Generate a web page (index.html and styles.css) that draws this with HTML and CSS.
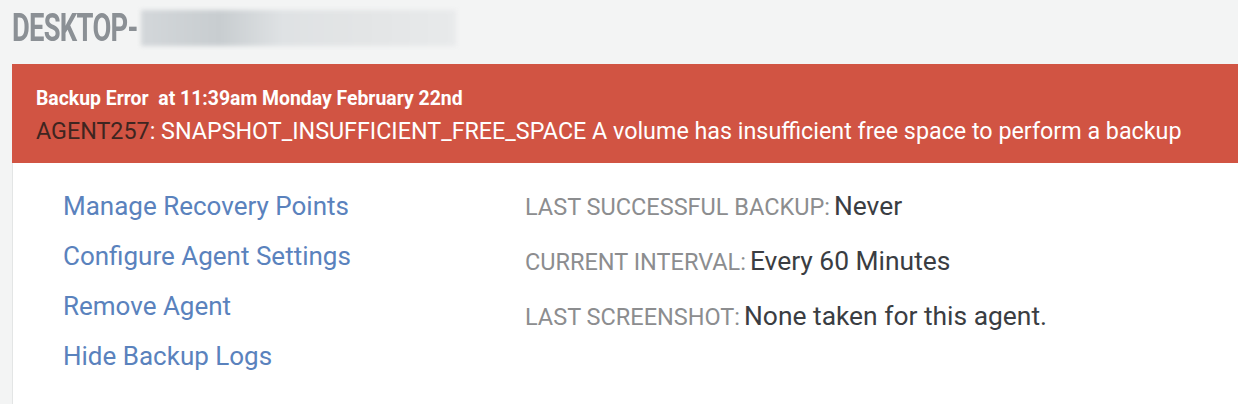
FILE: index.html
```html
<!DOCTYPE html>
<html lang="en">
<head>
    <meta charset="UTF-8">
    <meta name="viewport" content="width=device-width, initial-scale=1.0">
    <title>Agent Details</title>
    <link rel="stylesheet" href="styles.css">
</head>
<body>
    <!-- Agent name (hostname is blurred) -->
    <div class="agent-header">
        <h1 class="agent-name">DESKTOP-</h1>
        <span class="hostname-blur"></span>
    </div>

    <!-- Error banner -->
    <div class="error-banner">
        <p class="error-title">Backup Error &nbsp;at 11:39am Monday February 22nd</p>
        <p class="error-message"><span class="agent-id">AGENT257</span>: SNAPSHOT_INSUFFICIENT_FREE_SPACE A volume has insufficient free space to perform a backup</p>
    </div>

    <div class="agent-panel">
        <ul class="agent-actions">
            <li><a href="#">Manage Recovery Points</a></li>
            <li><a href="#">Configure Agent Settings</a></li>
            <li><a href="#">Remove Agent</a></li>
            <li><a href="#">Hide Backup Logs</a></li>
        </ul>

        <ul class="agent-stats">
            <li><span class="stat-label">Last Successful Backup:</span> <span class="stat-value">Never</span></li>
            <li><span class="stat-label">Current Interval:</span> <span class="stat-value">Every 60 Minutes</span></li>
            <li><span class="stat-label">Last Screenshot:</span> <span class="stat-value">None taken for this agent.</span></li>
        </ul>
    </div>
</body>
</html>
```

FILE: styles.css
```css
body {
    margin: 0;
    background-color: #f3f4f4;
    font-family: Roboto, "Liberation Sans", sans-serif;
    height: 404px;
    overflow: hidden;
}
.agent-header {
    display: flex;
    align-items: center;
    height: 64px;
    padding-left: 12px;
}
/* the name font is a condensed one, so squeeze it */
.agent-name {
    margin: 0 -48px 0 0;
    font-family: Roboto, sans-serif;
    font-weight: bold;
    font-size: 38px;
    color: #8b9095;
    letter-spacing: -1px;
    margin-top: -9px;
    transform: scaleX(0.72);
    transform-origin: left center;
}
.hostname-blur {
    display: block;
    width: 315px;
    height: 36px;
    margin-top: -9px;
    margin-left: 3px;
    background: linear-gradient(90deg, #d3d7da 0%, #c8cdd0 25%, #dfe2e4 45%, #e3e5e6 70%, #e8eaeb 100%);
    filter: blur(2px);
}
.error-banner {
    margin-left: 12px;
    background-color: #d15443;
    padding: 23px 24px 17px;
    color: #fff;
}
.error-banner p {
    margin: 0;
}
.error-title {
    font-weight: bold;
    font-size: 19.4px;
    line-height: 24px;
}
.error-banner .error-message {
    margin-top: 5px;
    font-size: 23.3px;
    line-height: 30px;
}
.agent-id {
    color: #3e2520;
}
.agent-panel {
    margin-left: 12px;
    border-left: 1px solid #e3e5e5;
    background: #fff;
    height: 241px;
    display: grid;
    grid-template-columns: 462px 1fr;
    padding: 18px 0 0 50px;
}
.agent-actions,
.agent-stats {
    list-style: none;
    margin: 0;
    padding: 0;
}
.agent-actions li {
    height: 50px;
    line-height: 50px;
    font-size: 26px;
}
.agent-actions a {
    color: #5a82bd;
    text-decoration: none;
}
.agent-stats {
    margin-top: -2px;
}
.agent-stats li {
    height: 55px;
    line-height: 55px;
}
.stat-label {
    text-transform: uppercase;
    color: #8c8d8f;
    font-size: 23.5px;
}
.stat-value {
    color: #3a3d42;
    font-size: 26.4px;
}
```
